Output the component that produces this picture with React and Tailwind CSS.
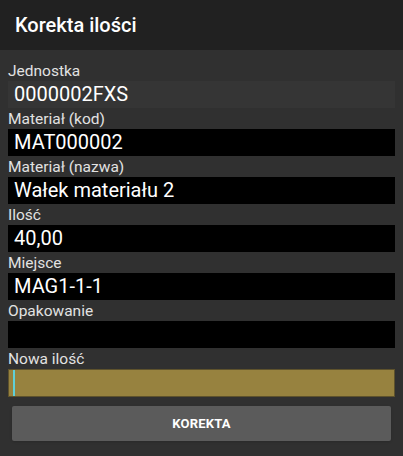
import React from 'react';

const fields = [
  { label: 'Materiał (kod)', value: 'MAT000002' },
  { label: 'Materiał (nazwa)', value: 'Wałek materiału 2' },
  { label: 'Ilość', value: '40,00' },
  { label: 'Miejsce', value: 'MAG1-1-1' },
  { label: 'Opakowanie', value: '' },
];

const Field = ({ label, value, dim }) => (
  <div>
    <div className="h-[21px] pt-[3px] text-[15.5px] leading-[17px] text-[#e2e2e2]">{label}</div>
    <div
      className={`h-[27px] pl-[6px] text-[20px] leading-[27px] text-white ${dim ? 'bg-[#353535]' : 'bg-black'}`}
    >
      {value}
    </div>
  </div>
);

export default function App() {
  return (
    <div
      className="w-[403px] h-[456px] bg-[#303030] flex flex-col"
      style={{ fontFamily: 'Roboto, "Liberation Sans", sans-serif' }}
    >
      {/* toolbar */}
      <div className="h-[50px] bg-[#212121] flex items-center px-[15px]">
        <h1 className="text-[20px] font-medium text-white">Korekta ilości</h1>
      </div>

      <div className="px-[8px] pt-[10px] flex flex-col">
        <Field label="Jednostka" value="0000002FXS" dim />
        {fields.map((f) => (
          <Field key={f.label} label={f.label} value={f.value} />
        ))}

        <div>
          <div className="h-[21px] pt-[3px] text-[15.5px] leading-[17px] text-[#e2e2e2]">Nowa ilość</div>
          <div className="h-[28px] bg-[#97823f] border border-[#5e522c] flex items-center pl-[4px]">
            <div className="w-[2px] h-[26px] bg-[#5fd0d8]" />
          </div>
        </div>

        <div className="px-[4px] pt-[9px]">
          <button className="w-full h-[35px] bg-[#5b5b5b] rounded-[2px] shadow-sm text-white text-[13px] font-bold tracking-[0.2px]">
            KOREKTA
          </button>
        </div>
      </div>
    </div>
  );
}
